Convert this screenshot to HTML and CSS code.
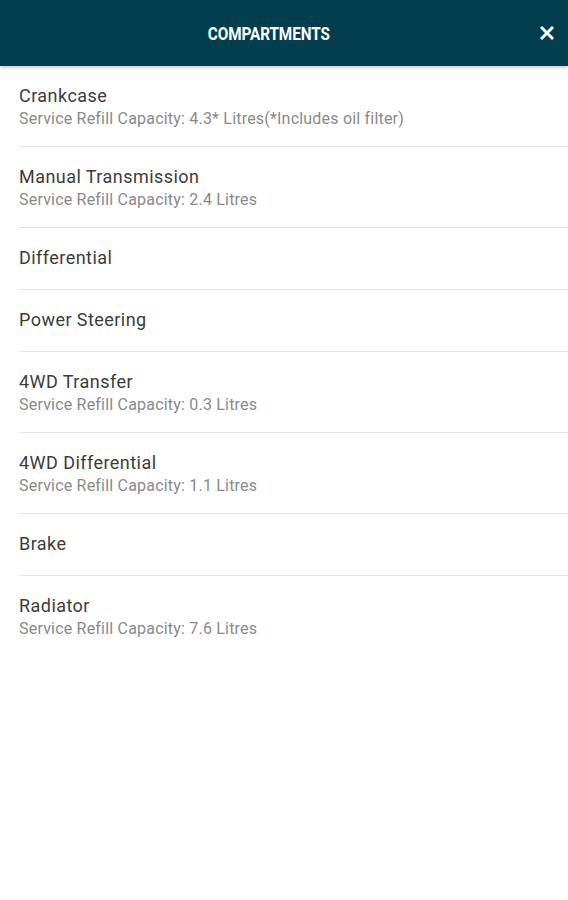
FILE: index.html
```html
<!DOCTYPE html>
<html lang="en">
<head>
    <meta charset="UTF-8">
    <meta name="viewport" content="width=device-width, initial-scale=1.0">
    <title>Compartments</title>
    <link rel="stylesheet" href="styles.css">
</head>
<body>
    <header class="topbar">
        <h1 class="topbar-title"><span>COMPARTMENTS</span></h1>
        <button class="close-btn" aria-label="Close">
            <svg width="14" height="14" viewBox="0 0 14 14">
                <path d="M2 2 L12 12 M12 2 L2 12" stroke="#fff" stroke-width="3" stroke-linecap="square"/>
            </svg>
        </button>
    </header>

    <ul class="list">
        <li class="item">
            <div class="item-name">Crankcase</div>
            <div class="item-sub">Service Refill Capacity: 4.3* Litres(*Includes oil filter)</div>
        </li>
        <li class="item">
            <div class="item-name">Manual Transmission</div>
            <div class="item-sub">Service Refill Capacity: 2.4 Litres</div>
        </li>
        <li class="item">
            <div class="item-name">Differential</div>
        </li>
        <li class="item">
            <div class="item-name">Power Steering</div>
        </li>
        <li class="item">
            <div class="item-name">4WD Transfer</div>
            <div class="item-sub">Service Refill Capacity: 0.3 Litres</div>
        </li>
        <li class="item">
            <div class="item-name">4WD Differential</div>
            <div class="item-sub">Service Refill Capacity: 1.1 Litres</div>
        </li>
        <li class="item">
            <div class="item-name">Brake</div>
        </li>
        <li class="item last">
            <div class="item-name">Radiator</div>
            <div class="item-sub">Service Refill Capacity: 7.6 Litres</div>
        </li>
    </ul>
</body>
</html>
```

FILE: styles.css
```css
body {
    margin: 0;
    font-family: Roboto, 'Liberation Sans', sans-serif;
    background: #fff;
}

.topbar {
    height: 66px;
    background: #023e4d;
    display: flex;
    align-items: center;
    justify-content: center;
    position: relative;
    box-shadow: 0 2px 3px rgba(0, 0, 0, 0.2);
}

.topbar-title {
    margin: 0;
    color: #fff;
    font-size: 18px;
    font-weight: 700;
    letter-spacing: -0.1px;
    transform: translateX(-15px);
}

.topbar-title span {
    display: inline-block;
    transform: scaleX(0.85);
}

.close-btn {
    position: absolute;
    right: 14px;
    top: 26px;
    background: none;
    border: none;
    padding: 0;
    cursor: pointer;
    line-height: 0;
}

.list {
    list-style: none;
    margin: 0;
    padding: 0 0 0 19px;
}

.item {
    min-height: 27px;
    padding: 19px 0 15px;
    border-bottom: 1px solid #e6e6e6;
}

.item.last {
    border-bottom: none;
}

.item-name {
    font-size: 18px;
    line-height: 22px;
    letter-spacing: 0.45px;
    color: #3c3c3c;
}

.item-sub {
    font-size: 16px;
    line-height: 24px;
    letter-spacing: 0.2px;
    color: #8a8a8a;
}
```
